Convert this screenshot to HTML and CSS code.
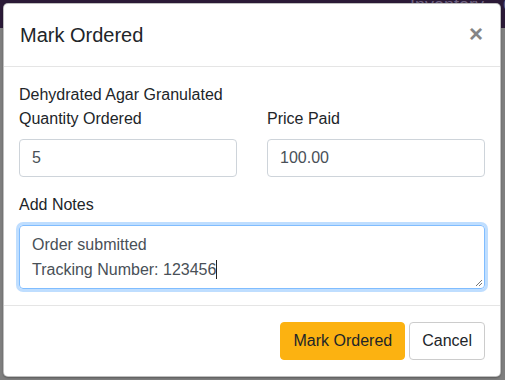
FILE: index.html
```html
<!DOCTYPE html>
<html>
<head>
<meta charset="utf-8">
<link rel="stylesheet" href="styles.css">
</head>
<body>
<div class="page">
  <div class="navbar"><span class="nav-link">Inventory</span><span class="nav-link">Orders</span></div>
  <div class="backdrop"></div>
</div>
<div class="modal">
  <div class="modal-header">
    <h5 class="modal-title">Mark Ordered</h5>
    <span class="close">&times;</span>
  </div>
  <div class="modal-body">
    <div class="item-name">Dehydrated Agar Granulated</div>
    <div class="row">
      <div class="form-group">
        <label class="label">Quantity Ordered</label>
        <div class="input">5</div>
      </div>
      <div class="form-group">
        <label class="label">Price Paid</label>
        <div class="input">100.00</div>
      </div>
    </div>
    <div class="form-group notes">
      <label class="label">Add Notes</label>
      <div class="textarea">Order submitted<br>Tracking Number: 123456<span class="caret"></span>
        <svg class="grip" width="8" height="8" viewBox="0 0 8 8"><path d="M7 1 L1 7 M7 4 L4 7" stroke="#777" stroke-width="1"/></svg>
      </div>
    </div>
  </div>
  <div class="modal-footer">
    <button class="btn btn-warning">Mark Ordered</button>
    <button class="btn btn-default">Cancel</button>
  </div>
</div>
</body>
</html>
```
FILE: styles.css
```css
html, body {
  margin: 0;
  padding: 0;
}
body {
  width: 505px;
  height: 380px;
  overflow: hidden;
  font-family: "Liberation Sans", Arial, sans-serif;
  font-size: 16px;
  line-height: 24px;
  color: #212529;
  background: #7f7f7f;
  position: relative;
}
.page {
  height: 380px;
}
.navbar {
  height: 28px;
  background: #2b1a37;
  display: flex;
  justify-content: flex-start;
  gap: 19px;
  padding-left: 410px;
  align-items: flex-end;
  overflow: hidden;
  white-space: nowrap;
}
.nav-link {
  color: #6f6282;
  font-size: 18px;
  line-height: 18px;
  transform: translateY(-14px);
}
.modal {
  position: absolute;
  left: 3px;
  top: 3px;
  width: 496px;
  background: #fff;
  border: 1px solid rgba(0,0,0,0.25);
  border-radius: 5px;
  box-shadow: 0 1px 2px rgba(0,0,0,0.3);
}
.modal-header {
  display: flex;
  align-items: flex-start;
  justify-content: space-between;
  padding: 16px;
  border-bottom: 1px solid #e5e5e5;
}
.modal-title {
  margin: 0;
  font-size: 20px;
  line-height: 30px;
  font-weight: 400;
  color: #212529;
}
.close {
  font-size: 24px;
  font-weight: 700;
  line-height: 24px;
  color: #858585;
  margin-top: 2px;
  margin-right: 1px;
}
.modal-body {
  padding: 16px 15px 16px 15px;
}
.item-name {
  line-height: 24px;
}
.row {
  display: grid;
  grid-template-columns: 1fr 1fr;
  column-gap: 30px;
}
.form-group {
  margin-bottom: 16px;
}
.label {
  display: block;
  margin-bottom: 8px;
  line-height: 24px;
}
.input {
  height: 36px;
  box-sizing: content-box;
  border: 1px solid #ced4da;
  border-radius: 4px;
  padding: 0 12px;
  line-height: 36px;
  color: #495057;
}
.notes {
  margin-bottom: 0;
}
.textarea {
  position: relative;
  height: 52px;
  padding: 6px 12px 4px 12px;
  border: 1px solid #80bdff;
  border-radius: 4px;
  box-shadow: 0 0 0 3px rgba(0,123,255,0.25);
  color: #495057;
  line-height: 25px;
}
.caret {
  display: inline-block;
  width: 1px;
  height: 19px;
  background: #222;
  vertical-align: -4px;
}
.grip {
  position: absolute;
  right: 1px;
  bottom: 1px;
}
.modal-footer {
  display: flex;
  justify-content: flex-end;
  gap: 4px;
  padding: 16px 15px 16px 16px;
  border-top: 1px solid #e5e5e5;
}
.btn {
  font-family: "Liberation Sans", Arial, sans-serif;
  font-size: 16px;
  line-height: 24px;
  padding: 6px 12px;
  border-radius: 4px;
  border: 1px solid transparent;
  margin: 0;
  cursor: pointer;
}
.btn-warning {
  background: #fcb211;
  border-color: #fcb211;
  color: #212529;
}
.btn-default {
  background: #fff;
  border-color: #ccc;
  color: #212529;
}
```
